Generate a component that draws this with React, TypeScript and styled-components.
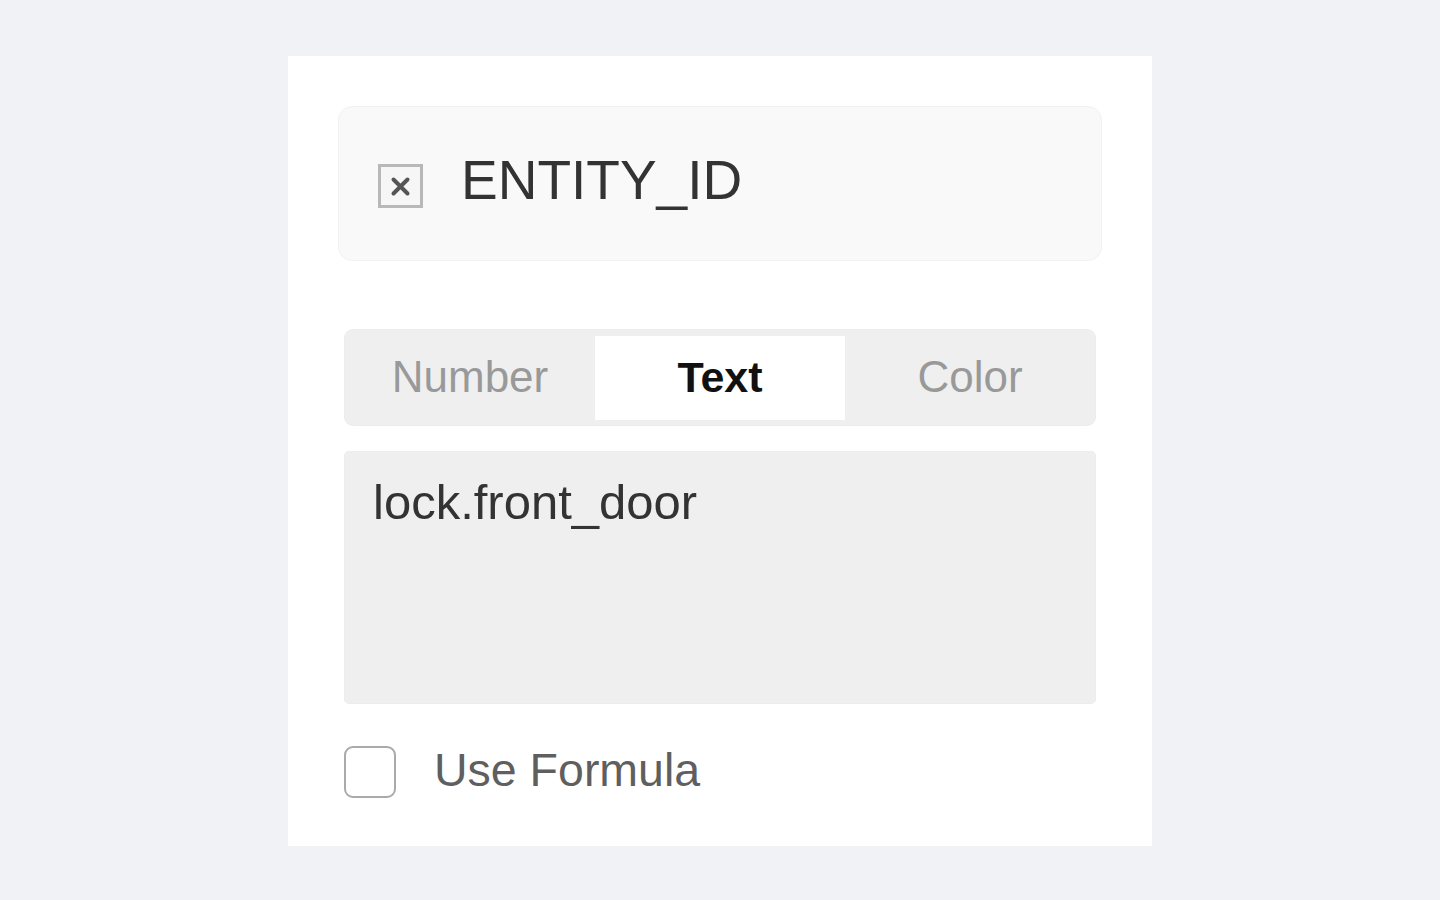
import React, { useState } from "react";
import styled, { createGlobalStyle } from "styled-components";

const Global = createGlobalStyle`
  html, body {
    margin: 0;
    padding: 0;
    background: #f1f2f6;
  }
  body {
    font-family: "Liberation Sans", Arial, sans-serif;
  }
`;

const Page = styled.div`
  min-height: 900px;
  padding-top: 56px;
  box-sizing: border-box;
`;

const Card = styled.div`
  width: 864px;
  height: 790px;
  margin: 0 auto;
  background: #ffffff;
  padding: 50px;
  box-sizing: border-box;
  display: flex;
  flex-direction: column;
`;

const Header = styled.div`
  height: 155px;
  flex: none;
  box-sizing: border-box;
  background: #f9f9f9;
  border: 1px solid #f1f1f1;
  border-radius: 14px;
  display: flex;
  align-items: center;
  padding-left: 39px;
  gap: 38px;
`;

const EntityIcon = styled.svg`
  width: 45px;
  height: 45px;
  flex: none;
  margin-top: 6px;
`;

const Title = styled.div`
  font-family: "Liberation Sans", Arial, sans-serif;
  font-size: 55px;
  color: #333333;
  letter-spacing: 0;
  line-height: 1;
  margin-top: -6px;
`;

const Body = styled.div`
  margin: 69px 7px 0;
  display: flex;
  flex-direction: column;
`;

const Tabs = styled.div`
  height: 95px;
  box-sizing: border-box;
  background: #efefef;
  border-radius: 8px;
  padding: 6px 0 5px;
  display: grid;
  grid-template-columns: repeat(3, 1fr);
  box-shadow: 0 0 0 1px #ececec;
`;

const Tab = styled.button<{ $active?: boolean }>`
  border: none;
  margin: 0;
  padding: 0;
  background: ${(p) => (p.$active ? "#ffffff" : "transparent")};
  color: ${(p) => (p.$active ? "#111111" : "#999999")};
  font-family: "Liberation Sans", Arial, sans-serif;
  font-size: ${(p) => (p.$active ? "43px" : "44px")};
  font-weight: ${(p) => (p.$active ? 700 : 400)};
  cursor: pointer;
  display: flex;
  align-items: center;
  justify-content: center;
  padding-bottom: 2px;
`;

const Area = styled.textarea`
  margin-top: 27px;
  height: 251px;
  box-sizing: border-box;
  background: #efefef;
  border: none;
  border-radius: 4px;
  box-shadow: 0 0 0 1px #ececec;
  padding: 21px 28px;
  resize: none;
  outline: none;
  font-family: "Liberation Sans", Arial, sans-serif;
  font-size: 49px;
  line-height: 1.2;
  color: #333333;
`;

const CheckRow = styled.label`
  margin-top: 43px;
  margin-left: -1px;
  display: flex;
  align-items: center;
  gap: 38px;
  cursor: pointer;
`;

const Box = styled.span`
  width: 52px;
  height: 52px;
  box-sizing: border-box;
  border: 2.5px solid #aaaaaa;
  border-radius: 9px;
  background: #ffffff;
  flex: none;
`;

const CheckLabel = styled.span`
  font-family: "Liberation Sans", Arial, sans-serif;
  font-size: 46.5px;
  color: #5f5f5f;
  margin-top: -4px;
`;

export default function App() {
  const [tab, setTab] = useState("Text");
  const [value, setValue] = useState("lock.front_door");
  return (
    <Page>
      <Global />
      <Card>
        <Header>
          <EntityIcon viewBox="0 0 45 45">
            <rect x="1.5" y="1.5" width="42" height="41" fill="#f6f6f6" stroke="#b8b8b8" strokeWidth="3" />
            <path d="M15.5 15.5 L29.5 29.5 M29.5 15.5 L15.5 29.5" stroke="#555555" strokeWidth="4" strokeLinecap="round" />
          </EntityIcon>
          <Title>ENTITY_ID</Title>
        </Header>
        <Body>
          <Tabs>
            {["Number", "Text", "Color"].map((t) => (
              <Tab key={t} $active={tab === t} onClick={() => setTab(t)}>
                {t}
              </Tab>
            ))}
          </Tabs>
          <Area value={value} onChange={(e) => setValue(e.target.value)} />
          <CheckRow>
            <Box />
            <CheckLabel>Use Formula</CheckLabel>
          </CheckRow>
        </Body>
      </Card>
    </Page>
  );
}
